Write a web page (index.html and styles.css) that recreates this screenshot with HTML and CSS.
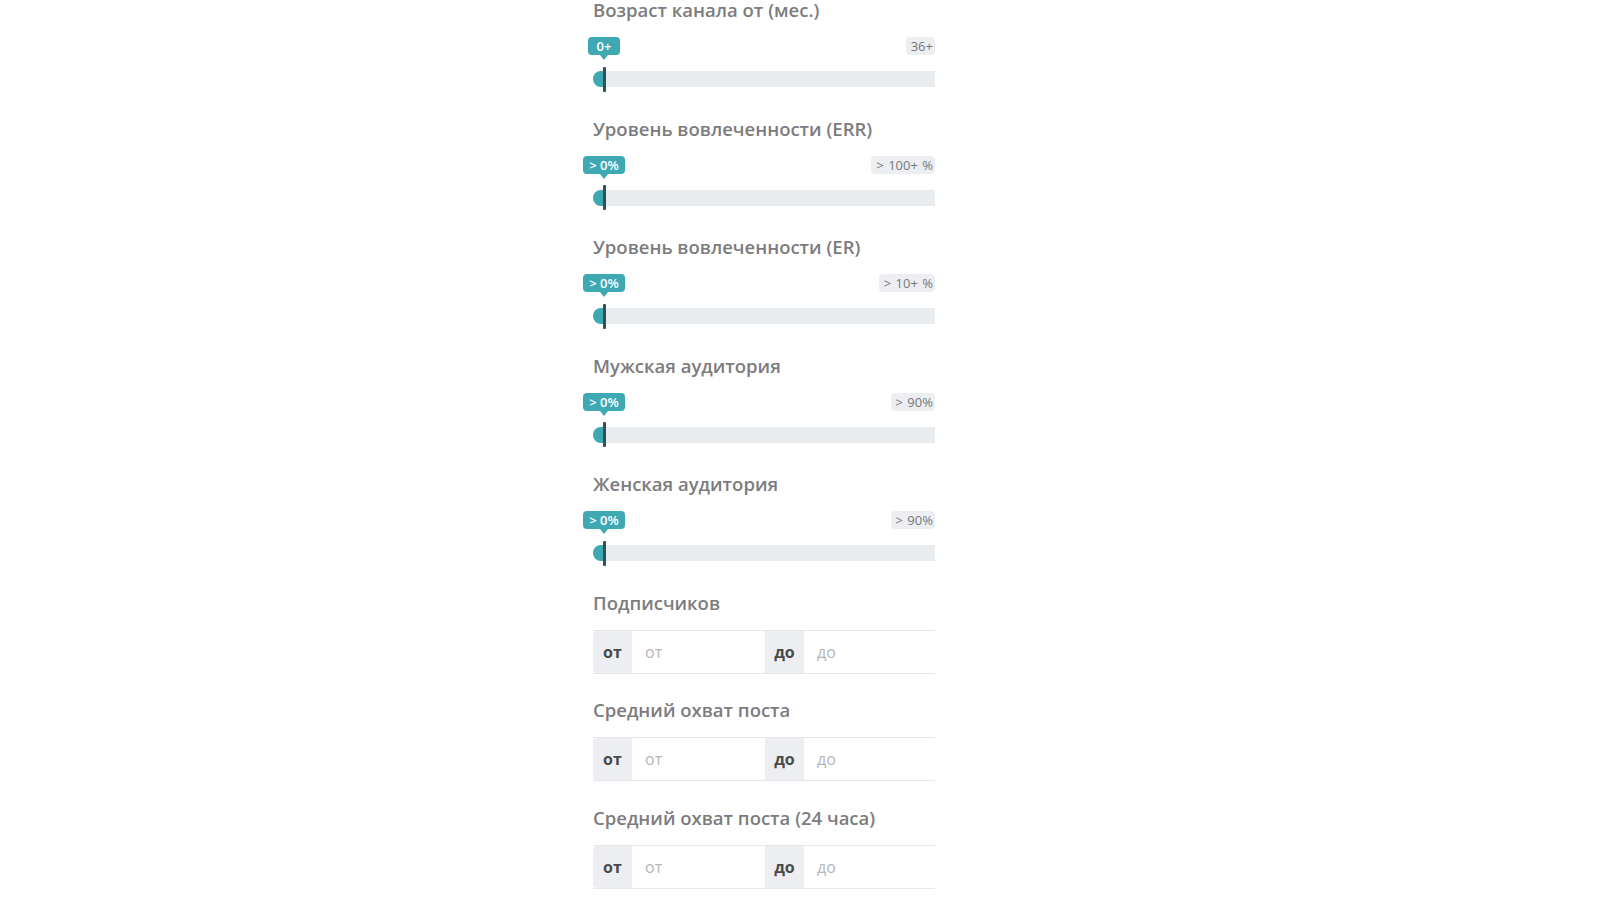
FILE: index.html
```html
<!DOCTYPE html>
<html lang="ru">
<head>
<meta charset="utf-8">
<title>Фильтры</title>
<link rel="stylesheet" href="styles.css">
</head>
<body>
<div class="panel">
  <section class="filter slider-filter">
    <h3 class="filter-title">Возраст канала от (мес.)</h3>
    <div class="range-labels">
      <span class="anchor"><span class="bubble">0+</span></span>
      <span class="bubble-max">36+</span>
    </div>
    <div class="track"><span class="handle"></span><span class="handle-line"></span></div>
  </section>
  <section class="filter slider-filter">
    <h3 class="filter-title">Уровень вовлеченности (ERR)</h3>
    <div class="range-labels">
      <span class="anchor"><span class="bubble">&gt; 0%</span></span>
      <span class="bubble-max">&gt; 100+ %</span>
    </div>
    <div class="track"><span class="handle"></span><span class="handle-line"></span></div>
  </section>
  <section class="filter slider-filter">
    <h3 class="filter-title">Уровень вовлеченности (ER)</h3>
    <div class="range-labels">
      <span class="anchor"><span class="bubble">&gt; 0%</span></span>
      <span class="bubble-max">&gt; 10+ %</span>
    </div>
    <div class="track"><span class="handle"></span><span class="handle-line"></span></div>
  </section>
  <section class="filter slider-filter">
    <h3 class="filter-title">Мужская аудитория</h3>
    <div class="range-labels">
      <span class="anchor"><span class="bubble">&gt; 0%</span></span>
      <span class="bubble-max">&gt; 90%</span>
    </div>
    <div class="track"><span class="handle"></span><span class="handle-line"></span></div>
  </section>
  <section class="filter slider-filter">
    <h3 class="filter-title">Женская аудитория</h3>
    <div class="range-labels">
      <span class="anchor"><span class="bubble">&gt; 0%</span></span>
      <span class="bubble-max">&gt; 90%</span>
    </div>
    <div class="track"><span class="handle"></span><span class="handle-line"></span></div>
  </section>
  <section class="filter input-filter">
    <h3 class="filter-title">Подписчиков</h3>
    <div class="input-group">
      <span class="addon addon-first">от</span>
      <input class="field field-from" type="text" placeholder="от">
      <span class="addon">до</span>
      <input class="field field-to" type="text" placeholder="до">
    </div>
  </section>
  <section class="filter input-filter">
    <h3 class="filter-title">Средний охват поста</h3>
    <div class="input-group">
      <span class="addon addon-first">от</span>
      <input class="field field-from" type="text" placeholder="от">
      <span class="addon">до</span>
      <input class="field field-to" type="text" placeholder="до">
    </div>
  </section>
  <section class="filter input-filter">
    <h3 class="filter-title">Средний охват поста (24 часа)</h3>
    <div class="input-group">
      <span class="addon addon-first">от</span>
      <input class="field field-from" type="text" placeholder="от">
      <span class="addon">до</span>
      <input class="field field-to" type="text" placeholder="до">
    </div>
  </section>
</div>
</body>
</html>
```

FILE: styles.css
```css
html, body {
  margin: 0;
  padding: 0;
  background: #ffffff;
  height: 900px;
  overflow: hidden;
}

body {
  font-family: "Open Sans", "Noto Sans", sans-serif;
}

.panel {
  width: 342px;
  margin-left: 593px;
  display: flex;
  flex-direction: column;
}

.filter {
  display: flex;
  flex-direction: column;
  flex: none;
}

.filter-title {
  margin: 0;
  font-size: 18.5px;
  line-height: 22px;
  font-weight: 600;
  color: #7c7c7e;
  white-space: nowrap;
}

.slider-filter {
  height: 118.5px;
}

.slider-filter:first-child {
  margin-top: -1px;
}

.range-labels {
  display: flex;
  align-items: center;
  justify-content: space-between;
  margin-top: 16px;
  height: 18px;
}

.anchor {
  width: 22px;
  display: flex;
  justify-content: center;
}

.bubble {
  position: relative;
  flex: none;
  box-sizing: border-box;
  min-width: 32px;
  text-align: center;
  background: #3ea8b3;
  color: #ffffff;
  font-size: 13px;
  font-weight: 600;
  line-height: 18px;
  padding: 0 6px;
  border-radius: 4px;
  white-space: nowrap;
}

.bubble::after {
  content: "";
  position: absolute;
  left: 50%;
  bottom: -5px;
  margin-left: -4px;
  border-left: 4px solid transparent;
  border-right: 4px solid transparent;
  border-top: 5px solid #3ea8b3;
}

.bubble-max {
  background: #eceef2;
  color: #76787c;
  font-size: 13px;
  font-weight: 500;
  line-height: 18px;
  padding: 0 2px 0 5px;
  border-radius: 4px;
  white-space: nowrap;
  word-spacing: 1px;
}

.track {
  margin-top: 16px;
  height: 16px;
  background: #e9ecef;
  border-radius: 8px 0 0 8px;
  display: flex;
  align-items: center;
}

.handle {
  width: 10px;
  height: 16px;
  background: #3ea8b3;
  border-radius: 8px 0 0 8px;
  flex: none;
}

.handle-line {
  width: 3px;
  height: 25px;
  background: #2f5258;
  border-radius: 1px;
  flex: none;
}

.input-filter {
  height: 107.5px;
}

.input-filter .filter-title {
  margin-bottom: 16px;
}

.input-group {
  display: flex;
  height: 44px;
  box-sizing: border-box;
  border-top: 1px solid #e4e6e9;
  border-bottom: 1px solid #e4e6e9;
}

.addon {
  flex: none;
  display: flex;
  align-items: center;
  justify-content: center;
  width: 39px;
  background: #eceef1;
  color: #4a4a4a;
  font-size: 16px;
  font-weight: 700;
}

.addon-first {
  border-radius: 4px 0 0 4px;
}

.field {
  flex: none;
  border: none;
  outline: none;
  margin: 0;
  padding: 0 0 0 13px;
  font-family: inherit;
  font-size: 16px;
  color: #555;
  background: #ffffff;
  box-sizing: border-box;
  height: 100%;
}

.field::placeholder {
  color: #b4b6b9;
}

.field-from {
  width: 133px;
}

.field-to {
  width: 130px;
}
```
